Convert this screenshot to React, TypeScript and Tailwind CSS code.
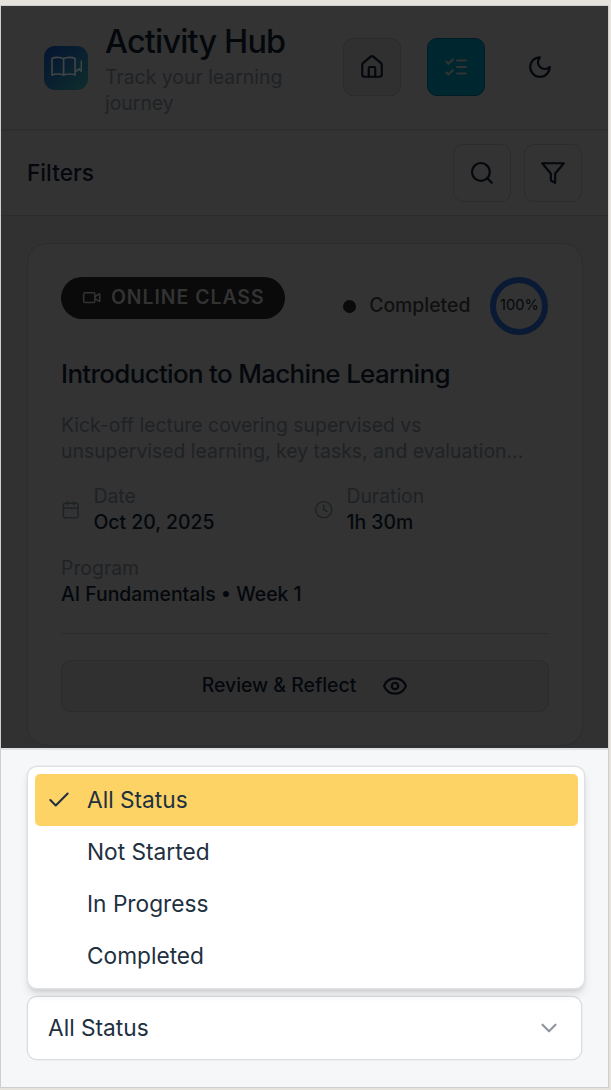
import React from "react";
import { Calendar, Check, ChevronDown, Clock, Eye, Video } from "lucide-react";

const iconProps = {
  viewBox: "0 0 24 24",
  fill: "none",
  stroke: "currentColor",
  strokeWidth: 2,
  strokeLinecap: "round" as const,
  strokeLinejoin: "round" as const,
};

function HomeIcon() {
  return (
    <svg {...iconProps} className="size-[26px]">
      <path d="M15 21v-8a1 1 0 0 0-1-1h-4a1 1 0 0 0-1 1v8" />
      <path d="M3 10a2 2 0 0 1 .709-1.528l7-5.999a2 2 0 0 1 2.582 0l7 5.999A2 2 0 0 1 21 10v9a2 2 0 0 1-2 2H5a2 2 0 0 1-2-2z" />
    </svg>
  );
}

function TasksIcon() {
  return (
    <svg {...iconProps} className="size-[26px]">
      <path d="m3 17 2 2 4-4M3 7l2 2 4-4M13 6h8M13 12h8M13 18h8" />
    </svg>
  );
}

function MoonIcon() {
  return (
    <svg {...iconProps} className="size-[26px]">
      <path d="M12 3a6 6 0 0 0 9 9 9 9 0 1 1-9-9Z" />
    </svg>
  );
}

function SearchIcon() {
  return (
    <svg {...iconProps} className="size-[26px]">
      <circle cx="11" cy="11" r="8.200" />
      <path d="m21 21-4.100-4.100" />
    </svg>
  );
}

function FunnelIcon() {
  return (
    <svg {...iconProps} className="size-[26px]">
      <path d="M22 3H2l8 9.460V19l4 2v-8.540L22 3z" />
    </svg>
  );
}

function BookLogo() {
  return (
    <svg viewBox="0 0 32 22" fill="none" stroke="currentColor" strokeWidth="1.7" strokeLinecap="round" strokeLinejoin="round" className="mb-[2px] h-[22px] w-[32px]">
      <path d="M13.600 2.800C10.800 .9 4.900 .9 2 2.500v16.600c3.300-1.500 8.600-1.500 11.600 0 3-1.500 8.300-1.500 11.500 0V2.500C22.200 .9 16.400 .9 13.600 2.800zM13.600 2.800v16.300" />
      <path d="M25.400 15h1.200l2.300-2.200 2.500 2.600V5" />
    </svg>
  );
}

const statuses = ["All Status", "Not Started", "In Progress", "Completed"];

function Field({ label, value }: { label: string; value: string }) {
  return (
    <div className="text-[19.4px] leading-[26px]">
      <div className="text-[#1f2225]">{label}</div>
      <div className="font-medium text-[#04080c]">{value}</div>
    </div>
  );
}

function Header() {
  return (
    <header className="flex h-[125px] shrink-0 items-start border-b-2 border-[#2e2e2f] pl-[43px]">
      <div className="mt-[39.5px] flex size-[44px] items-center justify-center rounded-[11px] bg-linear-to-br from-[#051430] via-[#0a2030] to-[#0f2d2b] text-[#3f4446]">
        <BookLogo />
      </div>
      <div className="ml-[17px] w-[200px] pt-[16px]">
        <h1 className="whitespace-nowrap text-[32.4px] leading-[40px] font-medium tracking-[-0.8px] text-[#04080c]">Activity Hub</h1>
        <p className="mt-[2px] text-[19.4px] leading-[26px] text-[#1f2225]">Track your learning journey</p>
      </div>
      <div className="ml-[38px] mt-[32.4px] flex gap-[26px] text-[#04080c]">
        <button className="flex size-[58px] items-center justify-center rounded-[10px] border border-[#2b2b2c] bg-[#303031]"><HomeIcon /></button>
        <button className="flex size-[58px] items-center justify-center rounded-[10px] border border-[#001c24] bg-[#00262f] text-[#333333]"><TasksIcon /></button>
        <button className="flex size-[58px] items-center justify-center"><MoonIcon /></button>
      </div>
    </header>
  );
}

function ActivityCard() {
  return (
    <article className="ml-[26px] mr-[25px] mt-[27px] h-[503px] rounded-[20px] border-[1.5px] border-[#2c2c2d] bg-[#333333] px-[33px] pt-[33px]">
      <div className="flex items-start justify-between">
        <div className="flex h-[42px] w-[224px] items-center gap-[10px] rounded-full bg-[#0a0a0a] pl-[20.5px] text-[#333333]">
          <Video size={19.4} strokeWidth={1.9} />
          <span className="whitespace-nowrap text-[19.4px] font-semibold tracking-[1px]">ONLINE CLASS</span>
        </div>
        <div className="mr-[0.6px] flex h-[58px] items-center">
          <span className="size-[13px] rounded-full bg-[#0a0a0a]" />
          <span className="ml-[13px] text-[19.4px] font-medium text-[#101010]">Completed</span>
          <div className="ml-[20px] flex size-[58px] items-center justify-center rounded-full border-[6px] border-[#0b1a34] text-[14.6px] text-[#04080c]">100%</div>
        </div>
      </div>
      <h2 className="mt-[22px] text-[25.9px] leading-[34px] font-medium tracking-[-0.65px] text-[#04080c]">Introduction to Machine Learning</h2>
      <p className="mt-[21px] text-[19.4px] leading-[26px] text-[#1f2225]">Kick-off lecture covering supervised vs<br />unsupervised learning, key tasks, and evaluation...</p>
      <div className="mt-[19px] flex">
        <div className="flex w-[253px] items-center gap-[13px]">
          <Calendar size={19.4} strokeWidth={1.8} className="mt-[2px] text-[#1f2225]" />
          <Field label="Date" value="Oct 20, 2025" />
        </div>
        <div className="flex items-center gap-[13px]">
          <Clock size={19.4} strokeWidth={1.8} className="mt-[2px] text-[#1f2225]" />
          <Field label="Duration" value="1h 30m" />
        </div>
      </div>
      <div className="mt-[20px]"><Field label="Program" value="AI Fundamentals • Week 1" /></div>
      <div className="mt-[26px] border-t border-[#2c2c2d] pt-[26px]">
        <button className="flex h-[52px] w-full items-center justify-center gap-[26px] rounded-[10px] border border-[#2b2b2c] bg-[#303031] text-[19.4px] font-medium text-[#04080c]">
          Review &amp; Reflect
          <Eye size={26} />
        </button>
      </div>
    </article>
  );
}

export default function App() {
  return (
    <div className="h-[1090px] w-[611px] overflow-hidden bg-[#e6e2dc] pt-[5px] font-['Inter',sans-serif]">
      <div className="flex h-[1083px] w-[609px] flex-col border border-[#cdcfd1] bg-[#313132]">
        <div className="flex h-[742px] shrink-0 flex-col overflow-hidden">
          <div className="shrink-0 bg-[#333333]">
            <Header />
            <div className="flex h-[85px] items-center justify-between border-b border-[#2c2c2d] pl-[26px] pr-[26px] text-[#04080c]">
              <span className="pt-px text-[22.7px] font-medium">Filters</span>
              <div className="flex gap-[13px]">
                <button className="flex size-[58px] items-center justify-center rounded-[10px] border border-[#2c2c2d]"><SearchIcon /></button>
                <button className="flex size-[58px] items-center justify-center rounded-[10px] border border-[#2c2c2d]"><FunnelIcon /></button>
              </div>
            </div>
          </div>
          <ActivityCard />
        </div>
        <section className="min-h-0 flex-1 border-t-2 border-[#e0e1e3] bg-[#f6f7f9] pl-[26px] pt-[16px] text-[22.7px] text-[#213040]">
          <div className="relative z-10 h-[223px] w-[558px] rounded-[10px] border border-[#dfe0e1] bg-white pt-[7px] pr-[6px] pb-[7px] pl-[7px] shadow-[0_0_0_0.5px_#e4e5e6,0_6px_8px_-1px_rgba(0,0,0,0.12),0_3px_4px_-2px_rgba(0,0,0,0.12)]">
            {statuses.map((status, i) => (
              <div key={status} className={i === 0 ? "flex h-[52px] items-center rounded-[5px] bg-[#fdd365]" : "flex h-[52px] items-center"}>
                <span className="flex w-[52px] pl-[11px]">{i === 0 && <Check size={26} strokeWidth={1.9} />}</span>
                <span>{status}</span>
              </div>
            ))}
          </div>
          <button className="mt-[7px] flex h-[64px] w-[555px] items-center justify-between rounded-[10px] border border-[#dcddde] bg-white pl-[20px] pr-[19px] shadow-[0_0_0_0.5px_#e4e5e6]">
            All Status
            <ChevronDown size={26} className="text-[#8f979f]" />
          </button>
        </section>
      </div>
    </div>
  );
}
